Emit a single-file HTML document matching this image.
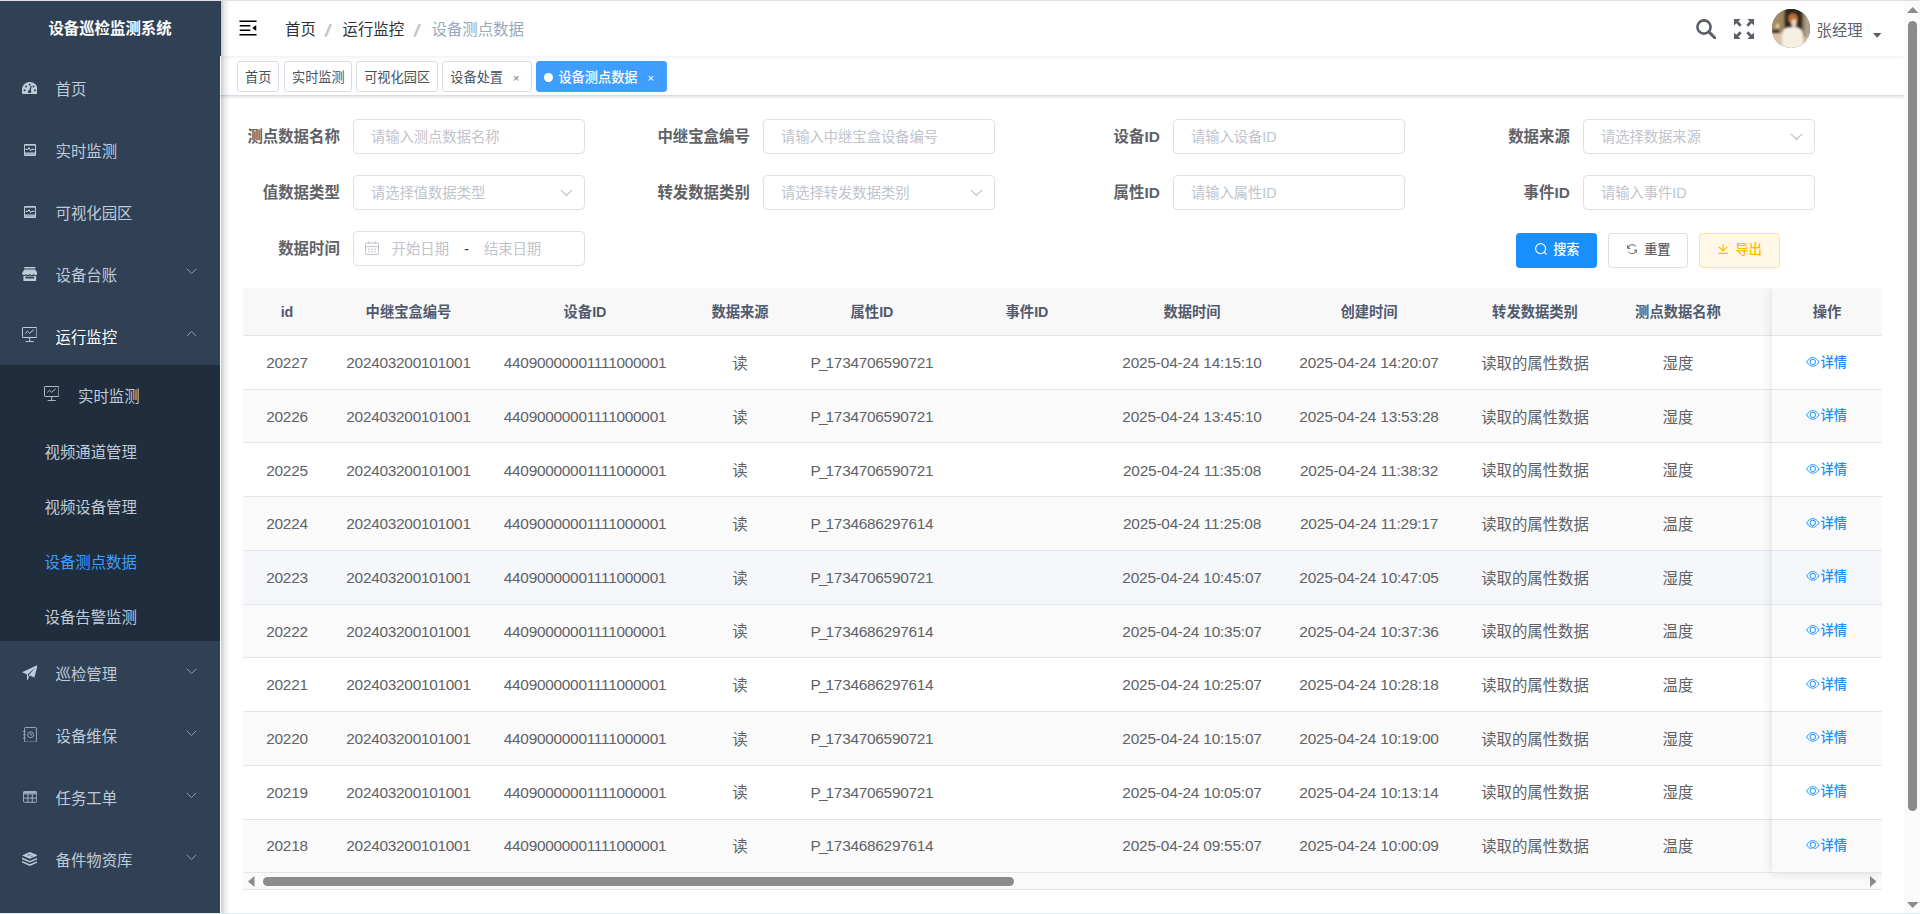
<!DOCTYPE html>
<html lang="zh-CN"><head><meta charset="utf-8"><title>设备测点数据</title>
<style>
*{box-sizing:border-box;margin:0;padding:0}
html,body{width:1920px;height:914px;overflow:hidden;background:#fff}
body{font-family:"Liberation Sans","Noto Sans CJK SC",sans-serif;color:#606266;position:relative}
.abs{position:absolute}
#topline{left:0;top:0;width:1920px;height:1px;background:#dfe1df;z-index:50}
#side{left:0;top:0;width:220px;height:914px;background:#304156;z-index:20}
#sidesh{left:221px;top:1px;width:9px;height:912px;background:linear-gradient(90deg,rgba(0,21,41,.22),rgba(0,21,41,.08) 45%,rgba(0,21,41,0));z-index:21}
#sidetop{left:220px;top:0;width:1px;height:55.5px;background:#2b3a4d;z-index:21}
#sub{left:0;top:365px;width:220px;height:276px;background:#1f2d3d}
#logo{left:0;top:19px;width:220px;text-align:center;font-size:15.4px;font-weight:bold;color:#fff;line-height:20px;white-space:nowrap}
.mi{position:absolute;left:55.5px;font-size:15.4px;color:#bfcbd9;white-space:nowrap;line-height:20px}
.ic{position:absolute}
#nav{left:220px;top:0;width:1684px;height:55.5px;background:#fff;box-shadow:0 1px 4px rgba(0,21,41,.08);z-index:10}
.bc{position:absolute;top:20px;font-size:15.4px;line-height:20px;white-space:nowrap;color:#303133}
#tags{left:220px;top:55px;width:1684px;height:40.5px;background:#fff;border-bottom:1px solid #d8dce5;box-shadow:0 1px 3px 0 rgba(0,0,0,.12),0 0 3px 0 rgba(0,0,0,.04);z-index:9}
.tag{position:absolute;top:6px;height:30.6px;border:1px solid #d8dce5;border-radius:3px;background:#fff;color:#495060;font-size:13.2px;line-height:31.5px;white-space:nowrap;text-align:left;padding-left:6.9px}
.tag.on{background:#409eff;border-color:#409eff;color:#fff}
.lab{position:absolute;font-size:15.4px;font-weight:bold;color:#606266;white-space:nowrap;line-height:20px;text-align:right;width:110px}
.inp{position:absolute;width:231.5px;height:35px;border:1px solid #dcdfe6;border-radius:4.4px;background:#fff;font-size:14.3px;color:#c0c4cc;line-height:35px;padding-left:16.5px;white-space:nowrap}
.btn{position:absolute;top:233px;height:35px;border-radius:3.3px;font-size:13.2px;font-weight:500;line-height:31px;white-space:nowrap;border:1px solid #dcdfe6}
#tbl{left:243px;top:288px;width:1639px;height:603px;overflow:hidden}
.hd{position:absolute;left:0;top:0;width:1639px;height:48px;background:#f8f8f9;border-bottom:1px solid #dfe6ec}
.row{position:absolute;left:0;width:1639px;height:53.7px;border-bottom:1px solid #dfe6ec;background:#fff}
.row.s{background:#fafafa}
.row.hv{background:#f5f7fa}
.c{position:absolute;transform:translateX(-50%);white-space:nowrap;font-size:15.4px;color:#606266;line-height:20px}
.n{letter-spacing:-0.265px}
.h{font-size:14.3px;font-weight:bold;color:#515a6e}
.hsb{position:absolute;left:0;top:585px;width:1639px;height:17px;background:#fafafa;border-bottom:1px solid #dfe6ec}
.hth{position:absolute;left:20px;top:4px;width:751px;height:9px;border-radius:4.5px;background:#8b8b8b}
#fixwrap{left:1742px;top:288px;width:140px;height:602px;overflow:hidden;z-index:5}
#fix{left:30px;top:0;width:110px;height:585px;box-shadow:0 0 10px rgba(0,0,0,.12);background:#fff}
.lk{position:absolute;font-size:13.2px;font-weight:500;color:#1890ff;white-space:nowrap;line-height:16px}
#vsb{left:1904px;top:1px;width:16px;height:913px;background:#fafafa;z-index:30}
#vth{left:1908px;top:21px;width:9px;height:790px;border-radius:4.5px;background:#8b8b8b;z-index:31}
#botline{left:0;top:913px;width:1920px;height:1px;background:#d9ecf2;z-index:40}

</style></head><body>
<div id="side" class="abs">
<div id="sub" class="abs"></div>
<div id="logo" class="abs">设备巡检监测系统</div>

<!-- dashboard -->
<svg class="ic" style="left:21.8px;top:81.5px" width="15.6" height="12.4" viewBox="0 0 15.6 12.4"><path d="M0 7.8A7.8 7.8 0 0 1 15.6 7.8V10.6Q15.6 12.4 13.8 12.4H1.8Q0 12.4 0 10.6Z" fill="#bfcbd9"/><g fill="#304156"><circle cx="2.6" cy="8.2" r="1"/><circle cx="4.1" cy="4.4" r="1"/><circle cx="7.8" cy="2.8" r="1"/><circle cx="11.5" cy="4.4" r="1"/><circle cx="13" cy="8.2" r="1"/><circle cx="7.6" cy="9.6" r="1.7"/><path d="M8.6 3.9l1.2.4-1.3 5.5-1.6-.4z"/></g></svg>
<div class="mi" style="top:80px">首页</div>

<!-- monitor small -->
<svg class="ic" style="left:24px;top:144px" width="12" height="12" viewBox="0 0 12 12"><rect x="0" y="0" width="12" height="12" rx="1" fill="#bfcbd9"/><rect x="1" y="1.7" width="10" height="6.8" fill="#304156"/><path d="M1.5 5.3H4l1 -1.6 1.6 3 1.1 -1.4H10.5" fill="none" stroke="#dde4ec" stroke-width="1"/><rect x="1" y="9.6" width="10" height="0.8" fill="#7d8a9c"/></svg>
<div class="mi" style="top:142px">实时监测</div>

<svg class="ic" style="left:24px;top:206px" width="12" height="12" viewBox="0 0 12 12"><rect x="0" y="0" width="12" height="12" rx="1" fill="#bfcbd9"/><rect x="1" y="1.7" width="10" height="6.8" fill="#304156"/><path d="M1.5 5.3H4l1 -1.6 1.6 3 1.1 -1.4H10.5" fill="none" stroke="#dde4ec" stroke-width="1"/><rect x="1" y="9.6" width="10" height="0.8" fill="#7d8a9c"/></svg>
<div class="mi" style="top:204px">可视化园区</div>

<!-- shop -->
<svg class="ic" style="left:21.8px;top:266.6px" width="15.6" height="14.2" viewBox="0 0 15.6 14.2"><g fill="#bfcbd9"><rect x="2.2" y="0" width="11.2" height="1.6" rx=".4"/><path d="M2.4 2.6H13.2L15.6 6.2Q15.6 8 13.7 8Q12.3 8 11.7 6.9Q11 8 9.7 8Q8.5 8 7.8 6.9Q7.1 8 5.9 8Q4.6 8 3.9 6.9Q3.3 8 1.9 8Q0 8 0 6.2Z"/><path d="M1.4 8.8Q2.6 9.3 3.9 8.4Q5.9 9.7 7.8 8.4Q9.7 9.7 11.7 8.4Q13 9.3 14.2 8.8V13.2Q14.2 14.2 13.2 14.2H2.4Q1.4 14.2 1.4 13.2Z"/></g><rect x="3.4" y="9.6" width="8.8" height="1.9" fill="#304156"/></svg>
<div class="mi" style="top:266px">设备台账</div>
<svg class="ic" style="left:186.2px;top:268.2px" width="11" height="7" viewBox="0 0 11 7"><path d="M0.8 0.8L5.5 5.6L10.2 0.8" fill="none" stroke="#8e9aad" stroke-width="1"/></svg>

<!-- monitor big -->
<svg class="ic" style="left:21.7px;top:326.9px" width="15.4" height="15.2" viewBox="0 0 15.4 15.2"><g fill="none" stroke="#c3cedb" stroke-width="1"><rect x="0.5" y="0.5" width="14.4" height="10" rx=".6"/><path d="M3.2 6.4L5.5 4.2L7.7 6.3L11.8 2.7"/><path d="M7.7 10.5V14.2M3.6 14.6H11.8"/></g></svg>
<div class="mi" style="top:328px;color:#fff">运行监控</div>
<svg class="ic" style="left:186.2px;top:330.2px" width="11" height="7" viewBox="0 0 11 7"><path d="M0.8 6.2L5.5 1.4L10.2 6.2" fill="none" stroke="#8e9aad" stroke-width="1"/></svg>

<svg class="ic" style="left:43.7px;top:385.9px" width="15.4" height="15.2" viewBox="0 0 15.4 15.2"><g fill="none" stroke="#b3bfce" stroke-width="1"><rect x="0.5" y="0.5" width="14.4" height="10" rx=".6"/><path d="M3.2 6.4L5.5 4.2L7.7 6.3L11.8 2.7"/><path d="M7.7 10.5V14.2M3.6 14.6H11.8"/></g></svg>
<div class="mi" style="left:78px;top:387px">实时监测</div>
<div class="mi" style="left:44.5px;top:443px">视频通道管理</div>
<div class="mi" style="left:44.5px;top:498px">视频设备管理</div>
<div class="mi" style="left:44.5px;top:553px;color:#409eff">设备测点数据</div>
<div class="mi" style="left:44.5px;top:608px">设备告警监测</div>

<!-- plane -->
<svg class="ic" style="left:21.7px;top:665px" width="15.7" height="15" viewBox="0 0 15.7 15"><path d="M15.7 0L12.4 12.4L7.6 10.5L6 14.6L4.9 14.9L5 9.6L0 7.2ZM13.6 2.2L5.9 9.3L6.2 12.7L7 9.8Z" fill="#bfcbd9" fill-rule="evenodd"/></svg>
<div class="mi" style="top:665px">巡检管理</div>
<svg class="ic" style="left:186.2px;top:668.2px" width="11" height="7" viewBox="0 0 11 7"><path d="M0.8 0.8L5.5 5.6L10.2 0.8" fill="none" stroke="#8e9aad" stroke-width="1"/></svg>

<!-- notebook -->
<svg class="ic" style="left:23px;top:726.6px" width="14" height="15.6" viewBox="0 0 14 15.6"><g fill="none" stroke="#98a5b7" stroke-width="1"><rect x="1.6" y="0.5" width="11.8" height="14.6" rx=".6"/><circle cx="7.6" cy="7.8" r="2.9"/><path d="M7.6 6.2V7.9H8.9"/><path d="M0 4.6H2.6M0 7.8H2.6M0 11H2.6"/></g></svg>
<div class="mi" style="top:727px">设备维保</div>
<svg class="ic" style="left:186.2px;top:730.2px" width="11" height="7" viewBox="0 0 11 7"><path d="M0.8 0.8L5.5 5.6L10.2 0.8" fill="none" stroke="#8e9aad" stroke-width="1"/></svg>

<!-- table -->
<svg class="ic" style="left:22.8px;top:791px" width="14.2" height="11.8" viewBox="0 0 14.2 11.8"><g fill="none" stroke="#a3afc0" stroke-width="1"><rect x="0.5" y="0.5" width="13.2" height="10.8" rx=".8"/><path d="M0.5 2.9H13.7M0.5 7.100H13.7M4.9 2.900V11.300M9.300 2.900V11.300"/><path d="M0.800 1.700H13.400" stroke-width="1.600"/></g></svg>
<div class="mi" style="top:789px">任务工单</div>
<svg class="ic" style="left:186.2px;top:792.2px" width="11" height="7" viewBox="0 0 11 7"><path d="M0.8 0.8L5.5 5.6L10.2 0.8" fill="none" stroke="#8e9aad" stroke-width="1"/></svg>

<!-- layers -->
<svg class="ic" style="left:21.7px;top:851.6px" width="15.8" height="14" viewBox="0 0 15.8 14"><g fill="#bfcbd9"><path d="M7.9 0L15.8 3.4L7.9 6.8L0 3.4Z"/><path d="M0 5.6L7.9 9L15.8 5.6V7.2L7.9 10.6L0 7.2Z"/><path d="M0 8.9L7.9 12.3L15.8 8.9V10.5L7.9 13.9L0 10.5Z"/></g><path d="M5 3.1L7.3 2.1L9 2.8L6.8 3.9ZM8.2 4.3L10.3 3.4L11.6 4L9.6 4.9Z" fill="#304156" opacity=".55"/></svg>
<div class="mi" style="top:851px">备件物资库</div>
<svg class="ic" style="left:186.2px;top:854.2px" width="11" height="7" viewBox="0 0 11 7"><path d="M0.8 0.8L5.5 5.6L10.2 0.8" fill="none" stroke="#8e9aad" stroke-width="1"/></svg>
</div>
<div id="nav" class="abs">
<svg class="abs" style="left:16.7px;top:16.5px;transform:rotate(180deg)" width="22" height="22" viewBox="0 0 1024 1024"><path fill="#000" d="M408 442h480c4.400 0 8-3.600 8-8v-56c0-4.400-3.600-8-8-8H408c-4.400 0-8 3.600-8 8v56c0 4.400 3.600 8 8 8zm-8 204c0 4.400 3.600 8 8 8h480c4.400 0 8-3.600 8-8v-56c0-4.400-3.600-8-8-8H408c-4.400 0-8 3.600-8 8v56zm504-486H120c-4.400 0-8 3.600-8 8v56c0 4.400 3.600 8 8 8h784c4.400 0 8-3.600 8-8v-56c0-4.400-3.600-8-8-8zm0 632H120c-4.400 0-8 3.600-8 8v56c0 4.400 3.600 8 8 8h784c4.400 0 8-3.600 8-8v-56c0-4.400-3.600-8-8-8zM142.400 642.100L298.700 519a8.840 8.840 0 0 0 0-13.900L142.400 381.900c-5.800-4.600-14.400-.5-14.400 6.900v246.300a8.900 8.900 0 0 0 14.400 7z"/></svg>
<span class="bc" style="left:65px">首页</span>
<span class="bc" style="left:106.3px;top:20px;color:#c0c4cc;font-size:16.2px;font-weight:bold;-webkit-text-stroke:0.5px #c0c4cc;transform:skewX(-13deg)">/</span>
<span class="bc" style="left:122.5px">运行监控</span>
<span class="bc" style="left:195.1px;top:20px;color:#c0c4cc;font-size:16.2px;font-weight:bold;-webkit-text-stroke:0.5px #c0c4cc;transform:skewX(-13deg)">/</span>
<span class="bc" style="left:211.5px;color:#97a8be">设备测点数据</span>

<!-- search -->
<svg class="abs" style="left:1476px;top:18.6px" width="20.4" height="20.4" viewBox="0 0 20.4 20.4"><circle cx="8" cy="8" r="6.6" fill="none" stroke="#5a5e66" stroke-width="2.6"/><path d="M12.9 12.9L19 19" stroke="#5a5e66" stroke-width="3" stroke-linecap="round"/></svg>
<!-- fullscreen -->
<svg class="abs" style="left:1514px;top:19px" width="20" height="20" viewBox="0 0 20 20"><g fill="#5a5e66"><path d="M0 0H6.600L4.300 2.300L7.700 5.700L5.700 7.700L2.300 4.300L0 6.600Z"/><path d="M20 0V6.600L17.700 4.300L14.300 7.700L12.300 5.700L15.700 2.300L13.400 0Z"/><path d="M0 20V13.400L2.300 15.700L5.700 12.300L7.700 14.300L4.300 17.700L6.600 20Z"/><path d="M20 20H13.400L15.700 17.700L12.300 14.300L14.300 12.300L17.700 15.700L20 13.400Z"/></g></svg>
<!-- avatar -->
<div class="abs" style="left:1551.7px;top:9px;width:38.600px;height:38.800px;border-radius:50%;overflow:hidden;background:#8a7357">
<div class="abs" style="left:-2px;top:-2px;width:43px;height:43px;filter:blur(.8px)">
<div class="abs" style="left:0;top:0;width:43px;height:43px;background:linear-gradient(90deg,#a8916f 0,#9c8463 32%,#2e241a 37%,#2e241a 72%,#8d7d68 77%,#b9ad98 88%,#8a7a64 100%)"></div>
<div class="abs" style="left:0;top:26px;width:16px;height:17px;background:#d8c4ac"></div>
<div class="abs" style="left:6px;top:17px;width:3px;height:4px;background:#f5d98a"></div>
<div class="abs" style="left:2px;top:23px;width:7px;height:3px;background:#3a2c20"></div>
<div class="abs" style="left:33px;top:30px;width:10px;height:13px;background:#cdbfa9"></div>
<div class="abs" style="left:18px;top:6px;width:10.500px;height:11px;border-radius:50%;background:#b8703a"></div>
<div class="abs" style="left:21.500px;top:11.500px;width:6px;height:8.500px;border-radius:40%;background:#ecc9b2"></div>
<div class="abs" style="left:12.500px;top:19.500px;width:21px;height:24px;border-radius:7px 7px 0 0;background:#f5f0e3"></div>
</div>
</div>
<span class="bc" style="left:1596.5px;top:21px;color:#5a6270">张经理</span>
<svg class="abs" style="left:1653.4px;top:33.4px" width="8.4" height="4.8" viewBox="0 0 8.4 4.8"><path d="M0 0H8.400L4.200 4.800Z" fill="#5a5e66"/></svg>
</div>

<div id="tags" class="abs">
<div class="tag" style="left:17.2px;width:42px">首页</div>
<div class="tag" style="left:64.1px;width:67.6px">实时监测</div>
<div class="tag" style="left:136.3px;width:81.4px">可视化园区</div>
<div class="tag" style="left:222.4px;width:89.2px">设备处置<span style="position:absolute;left:69.5px;top:0.5px;font-size:11px;color:#6b7280">×</span></div>
<div class="tag on" style="left:316px;width:131px;padding-left:21.4px;font-weight:500"><span style="position:absolute;left:7px;top:10.8px;width:9px;height:9px;border-radius:50%;background:#fff"></span>设备测点数据<span style="position:absolute;left:110.5px;top:0.5px;font-size:11px">×</span></div>
</div>
<div class="lab" style="left:229.8px;top:127.2px">测点数据名称</div>
<div class="inp" style="left:353.4px;top:119px">请输入测点数据名称</div>
<div class="lab" style="left:639.8px;top:127.2px">中继宝盒编号</div>
<div class="inp" style="left:763.4px;top:119px">请输入中继宝盒设备编号</div>
<div class="lab" style="left:1049.8px;top:127.2px">设备ID</div>
<div class="inp" style="left:1173.4px;top:119px">请输入设备ID</div>
<div class="lab" style="left:1459.8px;top:127.2px">数据来源</div>
<div class="inp" style="left:1583.4px;top:119px">请选择数据来源<svg class="abs" style="left:205.6px;top:12.6px" width="13" height="8" viewBox="0 0 13 8"><path d="M0.800 0.900L6.500 6.300L12.200 0.900" fill="none" stroke="#c0c4cc" stroke-width="1.2"/></svg></div>

<div class="lab" style="left:229.8px;top:183.2px">值数据类型</div>
<div class="inp" style="left:353.4px;top:175px">请选择值数据类型<svg class="abs" style="left:205.6px;top:12.6px" width="13" height="8" viewBox="0 0 13 8"><path d="M0.800 0.900L6.500 6.300L12.200 0.900" fill="none" stroke="#c0c4cc" stroke-width="1.2"/></svg></div>
<div class="lab" style="left:639.8px;top:183.2px">转发数据类别</div>
<div class="inp" style="left:763.4px;top:175px">请选择转发数据类别<svg class="abs" style="left:205.6px;top:12.6px" width="13" height="8" viewBox="0 0 13 8"><path d="M0.800 0.900L6.500 6.300L12.200 0.900" fill="none" stroke="#c0c4cc" stroke-width="1.2"/></svg></div>
<div class="lab" style="left:1049.8px;top:183.2px">属性ID</div>
<div class="inp" style="left:1173.4px;top:175px">请输入属性ID</div>
<div class="lab" style="left:1459.8px;top:183.2px">事件ID</div>
<div class="inp" style="left:1583.4px;top:175px">请输入事件ID</div>

<div class="lab" style="left:229.8px;top:239.2px">数据时间</div>
<div class="inp" style="left:353.4px;top:231px;padding-left:0">
<svg class="abs" style="left:11px;top:9.2px" width="14" height="14" viewBox="0 0 14 14"><g fill="none" stroke="#c0c4cc" stroke-width="1"><rect x="0.500" y="2" width="13" height="11.500" rx=".8"/><path d="M0.500 5.600H13.500M3.700 0.300V3M10.300 0.300V3"/></g><g fill="#c0c4cc"><rect x="3" y="7.600" width="1.600" height="1.200"/><rect x="6.200" y="7.600" width="1.600" height="1.200"/><rect x="9.400" y="7.600" width="1.600" height="1.200"/><rect x="3" y="10.200" width="1.600" height="1.200"/><rect x="6.200" y="10.200" width="1.600" height="1.200"/><rect x="9.400" y="10.200" width="1.600" height="1.200"/></g></svg>
<span class="abs" style="left:37.4px;top:0">开始日期</span><span class="abs" style="left:109.8px;top:0;color:#303133">-</span><span class="abs" style="left:129.6px;top:0">结束日期</span></div>

<div class="btn" style="left:1516px;width:81px;background:#1890ff;border-color:#1890ff;color:#fff"><svg class="abs" style="left:17.900px;top:9px" width="12" height="12" viewBox="0 0 12 12"><circle cx="5.600" cy="5.600" r="5" fill="none" stroke="#fff" stroke-width="1.100"/><path d="M9.200 9.200L11.600 11.600" stroke="#fff" stroke-width="1.100"/></svg><span class="abs" style="left:36.200px;top:0">搜索</span></div>
<div class="btn" style="left:1608px;width:80px;background:#fff;color:#606266"><svg class="abs" style="left:17.600px;top:9.800px" width="10.400" height="10.400" viewBox="0 0 10.400 10.400"><g fill="none" stroke="#606266" stroke-width="1"><path d="M0.900 4.200A4.400 4.400 0 0 1 8.900 2.600"/><path d="M9.500 6.200A4.400 4.400 0 0 1 1.500 7.800"/><path d="M0.600 1.300V4.300H3.400M9.800 9.100V6.100H7"/></g></svg><span class="abs" style="left:35.200px;top:0">重置</span></div>
<div class="btn" style="left:1699px;width:81px;background:#fff8e6;border-color:#ffe399;color:#ffba00"><svg class="abs" style="left:18px;top:10.100px" width="10" height="10" viewBox="0 0 10 10"><path d="M5 0V6.800M0.900 3L5 7L9.100 3M0 9.400H10" fill="none" stroke="#ffba00" stroke-width="1.100"/></svg><span class="abs" style="left:35.600px;top:0">导出</span></div>
<div id="tbl" class="abs">
<div class="hd"><span class="c h" style="left:44.0px;top:14.2px">id</span><span class="c h" style="left:165.5px;top:14.2px">中继宝盒编号</span><span class="c h" style="left:342.0px;top:14.2px">设备ID</span><span class="c h" style="left:497.0px;top:14.2px">数据来源</span><span class="c h" style="left:629.0px;top:14.2px">属性ID</span><span class="c h" style="left:784.0px;top:14.2px">事件ID</span><span class="c h" style="left:949.0px;top:14.2px">数据时间</span><span class="c h" style="left:1126.0px;top:14.2px">创建时间</span><span class="c h" style="left:1292.0px;top:14.2px">转发数据类别</span><span class="c h" style="left:1435.0px;top:14.2px">测点数据名称</span></div>
<div class="row" style="top:48px;height:54px"><span class="c n" style="left:44.0px;top:17.2px">20227</span><span class="c n" style="left:165.5px;top:17.2px">202403200101001</span><span class="c n" style="left:342.0px;top:17.2px">44090000001111000001</span><span class="c" style="left:497.0px;top:18.1px">读</span><span class="c n" style="left:629.0px;top:17.2px"><span style="letter-spacing:-1.95px">P_</span>1734706590721</span><span class="c n" style="left:949.0px;top:17.2px;letter-spacing:-0.19px">2025-04-24 14:15:10</span><span class="c n" style="left:1126.0px;top:17.2px;letter-spacing:-0.19px">2025-04-24 14:20:07</span><span class="c" style="left:1292.0px;top:18.1px">读取的属性数据</span><span class="c" style="left:1435.0px;top:18.1px">湿度</span></div>
<div class="row s" style="top:102px;height:53px"><span class="c n" style="left:44.0px;top:16.9px">20226</span><span class="c n" style="left:165.5px;top:16.9px">202403200101001</span><span class="c n" style="left:342.0px;top:16.9px">44090000001111000001</span><span class="c" style="left:497.0px;top:17.8px">读</span><span class="c n" style="left:629.0px;top:16.9px"><span style="letter-spacing:-1.95px">P_</span>1734706590721</span><span class="c n" style="left:949.0px;top:16.9px;letter-spacing:-0.19px">2025-04-24 13:45:10</span><span class="c n" style="left:1126.0px;top:16.9px;letter-spacing:-0.19px">2025-04-24 13:53:28</span><span class="c" style="left:1292.0px;top:17.8px">读取的属性数据</span><span class="c" style="left:1435.0px;top:17.8px">湿度</span></div>
<div class="row" style="top:155px;height:54px"><span class="c n" style="left:44.0px;top:17.5px">20225</span><span class="c n" style="left:165.5px;top:17.5px">202403200101001</span><span class="c n" style="left:342.0px;top:17.5px">44090000001111000001</span><span class="c" style="left:497.0px;top:18.4px">读</span><span class="c n" style="left:629.0px;top:17.5px"><span style="letter-spacing:-1.95px">P_</span>1734706590721</span><span class="c n" style="left:949.0px;top:17.5px;letter-spacing:-0.19px">2025-04-24 11:35:08</span><span class="c n" style="left:1126.0px;top:17.5px;letter-spacing:-0.19px">2025-04-24 11:38:32</span><span class="c" style="left:1292.0px;top:18.4px">读取的属性数据</span><span class="c" style="left:1435.0px;top:18.4px">湿度</span></div>
<div class="row s" style="top:209px;height:54px"><span class="c n" style="left:44.0px;top:17.2px">20224</span><span class="c n" style="left:165.5px;top:17.2px">202403200101001</span><span class="c n" style="left:342.0px;top:17.2px">44090000001111000001</span><span class="c" style="left:497.0px;top:18.1px">读</span><span class="c n" style="left:629.0px;top:17.2px"><span style="letter-spacing:-1.95px">P_</span>1734686297614</span><span class="c n" style="left:949.0px;top:17.2px;letter-spacing:-0.19px">2025-04-24 11:25:08</span><span class="c n" style="left:1126.0px;top:17.2px;letter-spacing:-0.19px">2025-04-24 11:29:17</span><span class="c" style="left:1292.0px;top:18.1px">读取的属性数据</span><span class="c" style="left:1435.0px;top:18.1px">温度</span></div>
<div class="row hv" style="top:263px;height:54px"><span class="c n" style="left:44.0px;top:16.8px">20223</span><span class="c n" style="left:165.5px;top:16.8px">202403200101001</span><span class="c n" style="left:342.0px;top:16.8px">44090000001111000001</span><span class="c" style="left:497.0px;top:17.7px">读</span><span class="c n" style="left:629.0px;top:16.8px"><span style="letter-spacing:-1.95px">P_</span>1734706590721</span><span class="c n" style="left:949.0px;top:16.8px;letter-spacing:-0.19px">2025-04-24 10:45:07</span><span class="c n" style="left:1126.0px;top:16.8px;letter-spacing:-0.19px">2025-04-24 10:47:05</span><span class="c" style="left:1292.0px;top:17.7px">读取的属性数据</span><span class="c" style="left:1435.0px;top:17.7px">湿度</span></div>
<div class="row s" style="top:317px;height:53px"><span class="c n" style="left:44.0px;top:16.5px">20222</span><span class="c n" style="left:165.5px;top:16.5px">202403200101001</span><span class="c n" style="left:342.0px;top:16.5px">44090000001111000001</span><span class="c" style="left:497.0px;top:17.4px">读</span><span class="c n" style="left:629.0px;top:16.5px"><span style="letter-spacing:-1.95px">P_</span>1734686297614</span><span class="c n" style="left:949.0px;top:16.5px;letter-spacing:-0.19px">2025-04-24 10:35:07</span><span class="c n" style="left:1126.0px;top:16.5px;letter-spacing:-0.19px">2025-04-24 10:37:36</span><span class="c" style="left:1292.0px;top:17.4px">读取的属性数据</span><span class="c" style="left:1435.0px;top:17.4px">温度</span></div>
<div class="row" style="top:370px;height:54px"><span class="c n" style="left:44.0px;top:17.2px">20221</span><span class="c n" style="left:165.5px;top:17.2px">202403200101001</span><span class="c n" style="left:342.0px;top:17.2px">44090000001111000001</span><span class="c" style="left:497.0px;top:18.1px">读</span><span class="c n" style="left:629.0px;top:17.2px"><span style="letter-spacing:-1.95px">P_</span>1734686297614</span><span class="c n" style="left:949.0px;top:17.2px;letter-spacing:-0.19px">2025-04-24 10:25:07</span><span class="c n" style="left:1126.0px;top:17.2px;letter-spacing:-0.19px">2025-04-24 10:28:18</span><span class="c" style="left:1292.0px;top:18.1px">读取的属性数据</span><span class="c" style="left:1435.0px;top:18.1px">温度</span></div>
<div class="row s" style="top:424px;height:54px"><span class="c n" style="left:44.0px;top:16.8px">20220</span><span class="c n" style="left:165.5px;top:16.8px">202403200101001</span><span class="c n" style="left:342.0px;top:16.8px">44090000001111000001</span><span class="c" style="left:497.0px;top:17.7px">读</span><span class="c n" style="left:629.0px;top:16.8px"><span style="letter-spacing:-1.95px">P_</span>1734706590721</span><span class="c n" style="left:949.0px;top:16.8px;letter-spacing:-0.19px">2025-04-24 10:15:07</span><span class="c n" style="left:1126.0px;top:16.8px;letter-spacing:-0.19px">2025-04-24 10:19:00</span><span class="c" style="left:1292.0px;top:17.7px">读取的属性数据</span><span class="c" style="left:1435.0px;top:17.7px">湿度</span></div>
<div class="row" style="top:478px;height:54px"><span class="c n" style="left:44.0px;top:16.5px">20219</span><span class="c n" style="left:165.5px;top:16.5px">202403200101001</span><span class="c n" style="left:342.0px;top:16.5px">44090000001111000001</span><span class="c" style="left:497.0px;top:17.4px">读</span><span class="c n" style="left:629.0px;top:16.5px"><span style="letter-spacing:-1.95px">P_</span>1734706590721</span><span class="c n" style="left:949.0px;top:16.5px;letter-spacing:-0.19px">2025-04-24 10:05:07</span><span class="c n" style="left:1126.0px;top:16.5px;letter-spacing:-0.19px">2025-04-24 10:13:14</span><span class="c" style="left:1292.0px;top:17.4px">读取的属性数据</span><span class="c" style="left:1435.0px;top:17.4px">湿度</span></div>
<div class="row s" style="top:532px;height:53px"><span class="c n" style="left:44.0px;top:16.1px">20218</span><span class="c n" style="left:165.5px;top:16.1px">202403200101001</span><span class="c n" style="left:342.0px;top:16.1px">44090000001111000001</span><span class="c" style="left:497.0px;top:17.0px">读</span><span class="c n" style="left:629.0px;top:16.1px"><span style="letter-spacing:-1.95px">P_</span>1734686297614</span><span class="c n" style="left:949.0px;top:16.1px;letter-spacing:-0.19px">2025-04-24 09:55:07</span><span class="c n" style="left:1126.0px;top:16.1px;letter-spacing:-0.19px">2025-04-24 10:00:09</span><span class="c" style="left:1292.0px;top:17.0px">读取的属性数据</span><span class="c" style="left:1435.0px;top:17.0px">温度</span></div>
<div class="hsb"><svg class="abs" style="left:5px;top:3.3px" width="6.5" height="11" viewBox="0 0 6.5 11"><path d="M6.500 0v11L0 5.500z" fill="#8b8b8b"/></svg><div class="hth"></div><svg class="abs" style="left:1626.5px;top:3.3px" width="6.5" height="11" viewBox="0 0 6.5 11"><path d="M0 0v11L6.500 5.500z" fill="#8b8b8b"/></svg></div>
</div>
<div id="fixwrap" class="abs"><div id="fix" class="abs">
<div class="hd" style="width:110px"><span class="c h" style="left:55px;top:14.2px">操作</span></div>
<div class="row" style="top:48px;height:54px;width:110px"><span class="lk" style="left:34px;top:18.7px"><svg class="abs" style="left:-0.100px;top:2.100px" width="13.600" height="9.800" viewBox="0 0 13.600 9.800"><path d="M0.600 4.900C3 1.400 5 0.600 6.800 0.600S10.600 1.400 13 4.900C10.600 8.400 8.600 9.200 6.800 9.200S3 8.400 0.600 4.900z" fill="none" stroke="#1890ff" stroke-width="1"/><circle cx="6.800" cy="4.900" r="2.700" fill="none" stroke="#1890ff" stroke-width="1"/></svg><span style="margin-left:14.500px">详情</span></span></div>
<div class="row s" style="top:102px;height:53px;width:110px"><span class="lk" style="left:34px;top:18.4px"><svg class="abs" style="left:-0.100px;top:2.100px" width="13.600" height="9.800" viewBox="0 0 13.600 9.800"><path d="M0.600 4.900C3 1.400 5 0.600 6.800 0.600S10.600 1.400 13 4.900C10.600 8.400 8.600 9.200 6.800 9.200S3 8.400 0.600 4.900z" fill="none" stroke="#1890ff" stroke-width="1"/><circle cx="6.800" cy="4.900" r="2.700" fill="none" stroke="#1890ff" stroke-width="1"/></svg><span style="margin-left:14.500px">详情</span></span></div>
<div class="row" style="top:155px;height:54px;width:110px"><span class="lk" style="left:34px;top:19.0px"><svg class="abs" style="left:-0.100px;top:2.100px" width="13.600" height="9.800" viewBox="0 0 13.600 9.800"><path d="M0.600 4.900C3 1.400 5 0.600 6.800 0.600S10.600 1.400 13 4.900C10.600 8.400 8.600 9.200 6.800 9.200S3 8.400 0.600 4.900z" fill="none" stroke="#1890ff" stroke-width="1"/><circle cx="6.800" cy="4.900" r="2.700" fill="none" stroke="#1890ff" stroke-width="1"/></svg><span style="margin-left:14.500px">详情</span></span></div>
<div class="row s" style="top:209px;height:54px;width:110px"><span class="lk" style="left:34px;top:18.7px"><svg class="abs" style="left:-0.100px;top:2.100px" width="13.600" height="9.800" viewBox="0 0 13.600 9.800"><path d="M0.600 4.900C3 1.400 5 0.600 6.800 0.600S10.600 1.400 13 4.900C10.600 8.400 8.600 9.200 6.800 9.200S3 8.400 0.600 4.900z" fill="none" stroke="#1890ff" stroke-width="1"/><circle cx="6.800" cy="4.900" r="2.700" fill="none" stroke="#1890ff" stroke-width="1"/></svg><span style="margin-left:14.500px">详情</span></span></div>
<div class="row hv" style="top:263px;height:54px;width:110px"><span class="lk" style="left:34px;top:18.3px"><svg class="abs" style="left:-0.100px;top:2.100px" width="13.600" height="9.800" viewBox="0 0 13.600 9.800"><path d="M0.600 4.900C3 1.400 5 0.600 6.800 0.600S10.600 1.400 13 4.900C10.600 8.400 8.600 9.200 6.800 9.200S3 8.400 0.600 4.900z" fill="none" stroke="#1890ff" stroke-width="1"/><circle cx="6.800" cy="4.900" r="2.700" fill="none" stroke="#1890ff" stroke-width="1"/></svg><span style="margin-left:14.500px">详情</span></span></div>
<div class="row s" style="top:317px;height:53px;width:110px"><span class="lk" style="left:34px;top:18.0px"><svg class="abs" style="left:-0.100px;top:2.100px" width="13.600" height="9.800" viewBox="0 0 13.600 9.800"><path d="M0.600 4.900C3 1.400 5 0.600 6.800 0.600S10.600 1.400 13 4.900C10.600 8.400 8.600 9.200 6.800 9.200S3 8.400 0.600 4.900z" fill="none" stroke="#1890ff" stroke-width="1"/><circle cx="6.800" cy="4.900" r="2.700" fill="none" stroke="#1890ff" stroke-width="1"/></svg><span style="margin-left:14.500px">详情</span></span></div>
<div class="row" style="top:370px;height:54px;width:110px"><span class="lk" style="left:34px;top:18.7px"><svg class="abs" style="left:-0.100px;top:2.100px" width="13.600" height="9.800" viewBox="0 0 13.600 9.800"><path d="M0.600 4.900C3 1.400 5 0.600 6.800 0.600S10.600 1.400 13 4.900C10.600 8.400 8.600 9.200 6.800 9.200S3 8.400 0.600 4.900z" fill="none" stroke="#1890ff" stroke-width="1"/><circle cx="6.800" cy="4.900" r="2.700" fill="none" stroke="#1890ff" stroke-width="1"/></svg><span style="margin-left:14.500px">详情</span></span></div>
<div class="row s" style="top:424px;height:54px;width:110px"><span class="lk" style="left:34px;top:18.3px"><svg class="abs" style="left:-0.100px;top:2.100px" width="13.600" height="9.800" viewBox="0 0 13.600 9.800"><path d="M0.600 4.900C3 1.400 5 0.600 6.800 0.600S10.600 1.400 13 4.900C10.600 8.400 8.600 9.200 6.800 9.200S3 8.400 0.600 4.900z" fill="none" stroke="#1890ff" stroke-width="1"/><circle cx="6.800" cy="4.900" r="2.700" fill="none" stroke="#1890ff" stroke-width="1"/></svg><span style="margin-left:14.500px">详情</span></span></div>
<div class="row" style="top:478px;height:54px;width:110px"><span class="lk" style="left:34px;top:18.0px"><svg class="abs" style="left:-0.100px;top:2.100px" width="13.600" height="9.800" viewBox="0 0 13.600 9.800"><path d="M0.600 4.900C3 1.400 5 0.600 6.800 0.600S10.600 1.400 13 4.900C10.600 8.400 8.600 9.200 6.800 9.200S3 8.400 0.600 4.900z" fill="none" stroke="#1890ff" stroke-width="1"/><circle cx="6.800" cy="4.900" r="2.700" fill="none" stroke="#1890ff" stroke-width="1"/></svg><span style="margin-left:14.500px">详情</span></span></div>
<div class="row s" style="top:532px;height:53px;width:110px"><span class="lk" style="left:34px;top:17.6px"><svg class="abs" style="left:-0.100px;top:2.100px" width="13.600" height="9.800" viewBox="0 0 13.600 9.800"><path d="M0.600 4.900C3 1.400 5 0.600 6.800 0.600S10.600 1.400 13 4.900C10.600 8.400 8.600 9.200 6.800 9.200S3 8.400 0.600 4.900z" fill="none" stroke="#1890ff" stroke-width="1"/><circle cx="6.800" cy="4.900" r="2.700" fill="none" stroke="#1890ff" stroke-width="1"/></svg><span style="margin-left:14.500px">详情</span></span></div>
</div></div>
<div id="vsb" class="abs"></div>
<svg class="abs" style="left:1906.8px;top:7px;z-index:32" width="11.400" height="6" viewBox="0 0 11.400 6"><path d="M0 6L5.700 0L11.400 6Z" fill="#8b8b8b"/></svg>
<div id="vth" class="abs"></div>
<svg class="abs" style="left:1906.8px;top:902px;z-index:32" width="11.400" height="6" viewBox="0 0 11.400 6"><path d="M0 0H11.400L5.700 6Z" fill="#8b8b8b"/></svg>
<div id="topline" class="abs"></div>
<div id="botline" class="abs"></div>
<div id="sidesh" class="abs"></div><div id="sidetop" class="abs"></div>
</body></html>
